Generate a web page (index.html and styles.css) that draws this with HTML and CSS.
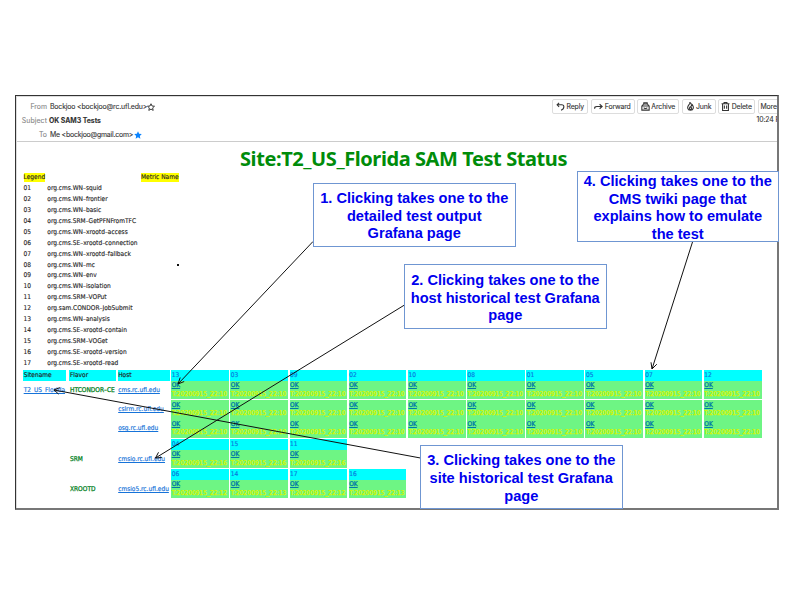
FILE: index.html
```html
<!DOCTYPE html>
<html lang="en">
<head>
<meta charset="utf-8">
<title>OK SAM3 Tests</title>
<link rel="stylesheet" href="styles.css">
</head>
<body>
<main class="slide">
<section class="mail">
  <header class="head">
    <div class="fields">
      <div class="field from"><span class="label">From</span><span class="value v-from">Bockjoo &lt;bockjoo@rc.ufl.edu&gt;</span><svg class="star" viewBox="0 0 16 16"><path d="M8 1.500 10 6l5 .5-3.700 3.300 1.100 5L8 12.200 3.600 14.800l1.100-5L1 6.500 6 6z" fill="none" stroke="#333" stroke-width="1.900"/></svg></div>
      <div class="field subject"><span class="label">Subject</span><b class="value v-subject">OK SAM3 Tests</b></div>
      <div class="field to"><span class="label">To</span><span class="value v-to">Me &lt;bockjoo@gmail.com&gt;</span><svg class="star" viewBox="0 0 16 16"><path d="M8 .5 10.300 5.500l5.200.6-3.800 3.700 1 5.500L8 12.700l-4.700 2.600 1-5.500L.5 6.100l5.200-.6z" fill="#0a84ff"/></svg></div>
    </div>
    <div class="side">
      <div class="buttons">
        <span class="btn reply"><svg viewBox="0 0 16 16"><path d="M5.500 1.500 2 5l3.500 3.500M2 5h8c3 0 4 1.500 4 3.500 0 3-2 5-5 6"/></svg><span>Reply</span></span>
        <span class="btn forward"><svg viewBox="0 0 16 16"><path d="M1 12c0-3 1-4 4-4h9M10 4l4.500 4-4.500 4"/></svg><span>Forward</span></span>
        <span class="btn archive"><svg viewBox="0 0 16 16"><path d="M1.500 7h13v7.500h-13zM2 7l2.500-3.500h7L14 7M5 3V1.200h6V3M5 10c.5 2 5.500 2 6 0"/></svg><span>Archive</span></span>
        <span class="btn junk"><svg viewBox="0 0 16 16"><path d="M7 1c1 3-5 5-4 10 1 5 9 5 10 0 .5-3-1-4-1.500-6-1 1-1 2-2 2C10 4 9 2 7 1zM8 8c-3 3-2 5 0 5s3-2 0-5"/></svg><span>Junk</span></span>
        <span class="btn delete"><svg viewBox="0 0 16 16"><path d="M1 3h14M5.500 3V1h5v2M2.800 3v12h10.400V3M6 6v6M10 6v6"/></svg><span>Delete</span></span>
        <span class="btn more"><span>More</span></span>
      </div>
      <div class="time">10:24 P</div>
    </div>
  </header>
  <h1 class="title"><span>Site:T2_US_Florida SAM Test Status</span></h1>
  <div class="legend">
    <div class="row lhead"><span><mark>Legend</mark></span><span class="metric"><mark>Metric Name</mark></span></div>
    <div class="row"><span>01</span><span>org.cms.WN–squid</span></div>
    <div class="row"><span>02</span><span>org.cms.WN–frontier</span></div>
    <div class="row"><span>03</span><span>org.cms.WN–basic</span></div>
    <div class="row"><span>04</span><span>org.cms.SRM–GetPFNFromTFC</span></div>
    <div class="row"><span>05</span><span>org.cms.WN–xrootd–access</span></div>
    <div class="row"><span>06</span><span>org.cms.SE–xrootd–connection</span></div>
    <div class="row"><span>07</span><span>org.cms.WN–xrootd–fallback</span></div>
    <div class="row"><span>08</span><span>org.cms.WN–mc</span><i class="dot"></i></div>
    <div class="row"><span>09</span><span>org.cms.WN–env</span></div>
    <div class="row"><span>10</span><span>org.cms.WN–isolation</span></div>
    <div class="row"><span>11</span><span>org.cms.SRM–VOPut</span></div>
    <div class="row"><span>12</span><span>org.sam.CONDOR–JobSubmit</span></div>
    <div class="row"><span>13</span><span>org.cms.WN–analysis</span></div>
    <div class="row"><span>14</span><span>org.cms.SE–xrootd–contain</span></div>
    <div class="row"><span>15</span><span>org.cms.SRM–VOGet</span></div>
    <div class="row"><span>16</span><span>org.cms.SE–xrootd–version</span></div>
    <div class="row"><span>17</span><span>org.cms.SE–xrootd–read</span></div>
  </div>
  <div class="tests">
    <div class="line hd"><b>Sitename</b><b>Flavor</b><b>Host</b><a>13</a><a>03</a><a>09</a><a>02</a><a>10</a><a>08</a><a>01</a><a>05</a><a>07</a><a>12</a></div>
    <div class="line"><u>T2_US_Florida</u><em>HTCONDOR–CE</em><u>cms.rc.ufl.edu</u><p><a>OK</a>T:20200915_22:10</p><p><a>OK</a>T:20200915_22:10</p><p><a>OK</a>T:20200915_22:10</p><p><a>OK</a>T:20200915_22:10</p><p><a>OK</a>T:20200915_22:10</p><p><a>OK</a>T:20200915_22:10</p><p><a>OK</a>T:20200915_22:10</p><p><a>OK</a>T:20200915_22:10</p><p><a>OK</a>T:20200915_22:10</p><p><a>OK</a>T:20200915_22:10</p></div>
    <div class="line"><i></i><i></i><u>cslrm.rc.ufl.edu</u><p><a>OK</a>T:20200915_22:10</p><p><a>OK</a>T:20200915_22:10</p><p><a>OK</a>T:20200915_22:10</p><p><a>OK</a>T:20200915_22:10</p><p><a>OK</a>T:20200915_22:10</p><p><a>OK</a>T:20200915_22:10</p><p><a>OK</a>T:20200915_22:10</p><p><a>OK</a>T:20200915_22:10</p><p><a>OK</a>T:20200915_22:10</p><p><a>OK</a>T:20200915_22:10</p></div>
    <div class="line"><i></i><i></i><u>osg.rc.ufl.edu</u><p><a>OK</a>T:20200915_22:10</p><p><a>OK</a>T:20200915_22:10</p><p><a>OK</a>T:20200915_22:10</p><p><a>OK</a>T:20200915_22:10</p><p><a>OK</a>T:20200915_22:10</p><p><a>OK</a>T:20200915_22:10</p><p><a>OK</a>T:20200915_22:10</p><p><a>OK</a>T:20200915_22:10</p><p><a>OK</a>T:20200915_22:10</p><p><a>OK</a>T:20200915_22:10</p></div>
    <div class="line hd"><i></i><i></i><i></i><a>04</a><a>15</a><a>11</a></div>
    <div class="line"><i></i><em>SRM</em><u>cmsio.rc.ufl.edu</u><p><a>OK</a>T:20200915_22:16</p><p><a>OK</a>T:20200915_22:16</p><p><a>OK</a>T:20200915_22:16</p></div>
    <div class="line hd"><i></i><i></i><i></i><a>06</a><a>14</a><a>17</a><a>16</a></div>
    <div class="line"><i></i><em>XROOTD</em><u>cmsio5.rc.ufl.edu</u><p><a>OK</a>T:20200915_22:12</p><p><a>OK</a>T:20200915_22:13</p><p><a>OK</a>T:20200915_22:12</p><p><a>OK</a>T:20200915_22:13</p></div>
  </div>
</section>
<svg class="arrows" viewBox="0 0 792 612">
  <path d="M313 241.500 178 384M184.200 381.500 178 384l2.200-6.500"/>
  <path d="M404.500 305 155.500 458M158.500 452.300 155.500 458l6.300-.5"/>
  <path d="M420.500 458 54 390M59.800 387.600 54 390l4.600 4.100"/>
  <path d="M692.500 242 652 369M651 362.300 652 369l4.800-4.800"/>
</svg>
<aside class="note n1">1. Clicking takes one to the<br>detailed test output<br>Grafana page</aside>
<aside class="note n2">2. Clicking takes one to the<br>host historical test Grafana<br>page</aside>
<aside class="note n3">3. Clicking takes one to the<br>site historical test Grafana<br>page</aside>
<aside class="note n4">4. Clicking takes one to the<br>CMS twiki page that<br>explains how to emulate<br>the test</aside>
</main>
</body>
</html>
```
FILE: styles.css
```css
* { box-sizing: border-box; }
body { margin: 0; background: #fff; }
.slide { position: relative; width: 792px; height: 612px; padding: 95px 0 0 15px; overflow: hidden; }
.mail { width: 764px; height: 415px; border: 1px solid #333; border-right: 2px solid #777; border-bottom: 2px solid #777; box-shadow: inset 1px 1px #ddd; overflow: hidden; font: 6.550px/11px "DejaVu Sans Condensed", "DejaVu Sans", sans-serif; font-stretch: condensed; color: #222; white-space: nowrap; }
.head { display: flex; justify-content: space-between; height: 46px; margin-left: 1px; border-bottom: 1px solid #ccc; font-family: Inter, sans-serif; font-size: 6.900px; font-stretch: normal; color: #333; -webkit-text-stroke: .1px; }
.fields { display: flex; flex-direction: column; width: 300px; padding-top: 4px; }
.field { display: flex; align-items: center; height: 14px; }
.field.subject { height: 14px; }
.field.to { height: 14px; }
.label { width: 30px; text-align: right; margin-right: 3px; color: #888; }
.subject .label { margin-right: 2px; letter-spacing: .1px; }
.v-from { width: 97px; letter-spacing: -.14px; }
.v-to { width: 83.500px; letter-spacing: -.2px; }
.v-subject { letter-spacing: -.03px; }
.to { padding-top: 1px; }
.star { width: 8px; height: 8px; margin-left: 0; }
.side { width: 225px; padding-top: 3px; }
.buttons { display: flex; gap: 2.500px; }
.btn { display: flex; flex: none; align-items: center; justify-content: center; gap: 1.500px; height: 15px; border: 1px solid #ddd; border-radius: 2px; letter-spacing: -.12px; }
.btn svg { width: 9px; height: 9px; fill: none; stroke: #333; stroke-width: 1.900; }
.reply { width: 36px; }
.forward { width: 44px; }
.archive { width: 42px; }
.junk { width: 34px; }
.delete { width: 37px; }
.more { width: 32px; justify-content: flex-start; padding-left: 2px; }
.time { padding-left: 204.500px; line-height: 12px; letter-spacing: -.1px; }
.title { display: flex; height: 29px; margin: 0 0 1px 224px; font: bold 20px/34px "Noto Sans", sans-serif; letter-spacing: -.42px; color: #008c0a; }
.legend { padding-left: 7.500px; -webkit-text-stroke: .12px; }
.row { display: grid; grid-template-columns: 23.800px 106.700px 40px; height: 10.940px; line-height: 11.500px; }
.lhead { grid-template-columns: 117.500px auto; }
mark { display: inline-block; height: 9px; line-height: 9.500px; background: #ff0; color: #222; }
.dot { width: 2px; height: 2px; margin: 4px 0 0 23px; background: #111; }
.tests { display: flex; flex-direction: column; gap: 1.500px; padding: 1px 0 0 7.200px; -webkit-text-stroke: .15px; }
.line { display: grid; grid-template-columns: 44.800px 46.700px 52px repeat(10, 57.700px); column-gap: 1.500px; height: 17.700px; }
.line.hd { height: 9.600px; line-height: 11px; }
.hd b:first-child { margin-right: 1.800px; }
.line > u, .line > em { font-style: normal; line-height: 18.500px; padding-left: .5px; }
.line u { color: #1673d9; }
.line em { color: #008020; -webkit-text-stroke: .25px; }
.hd b, .hd a { padding-left: .5px; background: #0ff; font-weight: 400; }
.hd a { color: #0878e0; text-decoration: none; }
.line p { display: flex; flex-direction: column; margin: 0; padding: .5px 0 0 .5px; overflow: hidden; background: #6ef584; color: #d4f600; font-size: 6.640px; line-height: 8.500px; -webkit-text-stroke: .3px; }
.line p a { color: #0079a8; text-decoration: underline; font-size: 6.500px; -webkit-text-stroke: .3px; }
.arrows { position: absolute; inset: 0; fill: none; stroke: #111; stroke-width: 1; }
.note { position: absolute; display: flow-root; width: 202.500px; border: 1px solid #6f96d2; background: #fff; color: #00e; font: bold 14.600px/17.500px "Liberation Sans", sans-serif; text-align: center; white-space: nowrap; }
.n1 { left: 313px; top: 183px; height: 64px; padding-top: 6px; }
.n2 { left: 404px; top: 264px; height: 65px; padding-top: 7px; }
.n3 { left: 420px; top: 445px; height: 64px; padding-top: 5px; line-height: 18px; }
.n4 { left: 576.500px; top: 171px; height: 71px; padding-top: 1px; }
```
